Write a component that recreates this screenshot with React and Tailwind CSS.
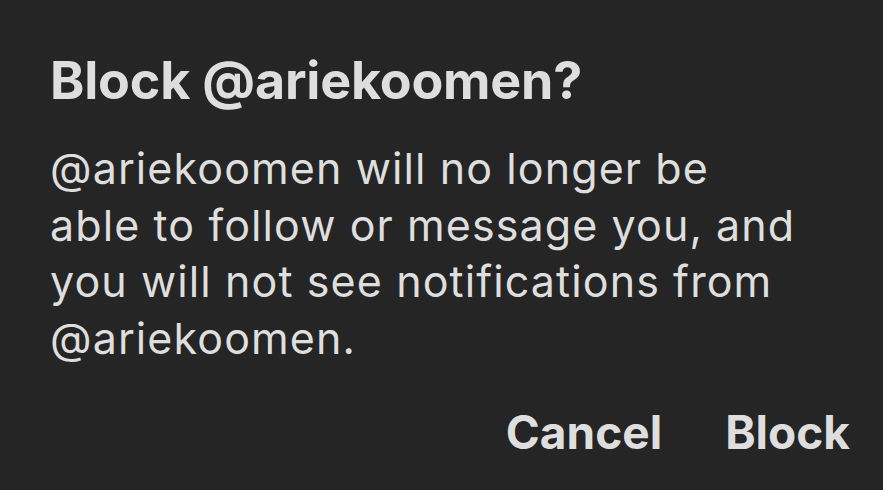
export default function App() {
  return (
    <div
      className="w-[883px] h-[490px] bg-[#252525] text-[#dedede] overflow-hidden flex flex-col"
      style={{ fontFamily: "Inter, 'Noto Sans', sans-serif" }}
    >
      <div className="pl-[50px] pr-[20px] pt-[51px]">
        <h1 className="text-[52px] leading-[60px] font-bold tracking-[-0.2px]">Block @ariekoomen?</h1>
        <p className="mt-[29px] text-[43px] leading-[56.5px] font-normal tracking-[1.1px]">
          @ariekoomen will no longer be
          <br />
          able to follow or message you, and
          <br />
          you will not see notifications from
          <br />
          @ariekoomen.
        </p>
      </div>
      <div className="flex justify-end items-center gap-[63px] pr-[33px] mt-[38px]">
        <button className="text-[46px] font-bold leading-[56px]">Cancel</button>
        <button className="text-[46px] font-bold leading-[56px]">Block</button>
      </div>
    </div>
  )
}
